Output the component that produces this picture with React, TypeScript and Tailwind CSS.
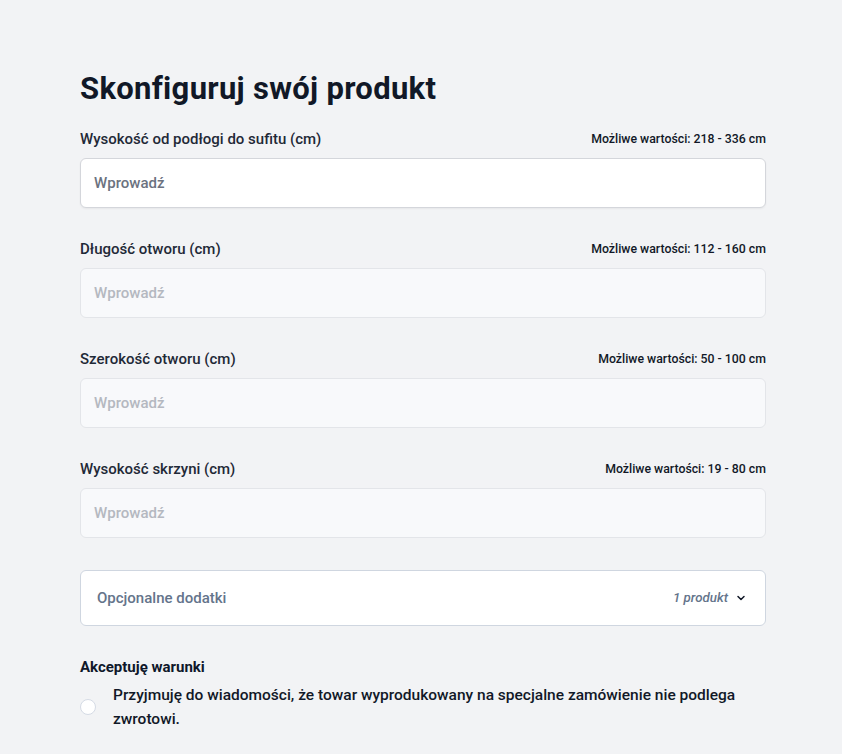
import { ChevronDown } from "lucide-react";

const fields = [
  { label: "Wysokość od podłogi do sufitu (cm)", range: "Możliwe wartości: 218 - 336 cm", active: true },
  { label: "Długość otworu (cm)", range: "Możliwe wartości: 112 - 160 cm", active: false },
  { label: "Szerokość otworu (cm)", range: "Możliwe wartości: 50 - 100 cm", active: false },
  { label: "Wysokość skrzyni (cm)", range: "Możliwe wartości: 19 - 80 cm", active: false },
];

export default function App() {
  return (
    <div
      className="min-h-[754px] bg-[#f2f3f5] text-[#111827]"
      style={{ fontFamily: "Roboto, 'Noto Sans', sans-serif" }}
    >
      <div className="w-[686px] ml-[80px] pt-[71px]">
        <h1 className="text-[31px] leading-[36px] font-bold tracking-[0.3px] text-[#111827]">
          Skonfiguruj swój produkt
        </h1>

        <div className="mt-[22px] flex flex-col gap-[31px]">
          {fields.map((f) => (
            <div key={f.label}>
              <div className="flex items-center justify-between h-[20px]">
                <span className="text-[15px] font-medium text-[#1f2937]">{f.label}</span>
                <span className="text-[12.3px] font-medium text-[#111827]">{f.range}</span>
              </div>
              <div
                className={`mt-[9px] h-[50px] rounded-[6px] border flex items-center px-[13px] text-[15px] font-medium ${
                  f.active
                    ? "bg-white border-[#d4d6db] text-[#6b7280] shadow-[0_1px_2px_rgba(0,0,0,0.05)]"
                    : "bg-[#f8f9fb] border-[#e3e5e9] text-[#b4b8c0]"
                }`}
              >
                Wprowadź
              </div>
            </div>
          ))}
        </div>

        <div className="mt-[32px] h-[56px] rounded-[6px] border border-[#cfd6e0] bg-white flex items-center justify-between pl-[16px] pr-[18px]">
          <span className="text-[15px] font-medium text-[#64748b]">Opcjonalne dodatki</span>
          <span className="flex items-center gap-[7px]">
            <span className="text-[13.3px] italic font-medium text-[#64748b]">1 produkt</span>
            <ChevronDown className="w-[12px] h-[12px] text-[#111827]" strokeWidth={3} />
          </span>
        </div>

        <div className="mt-[31px] text-[15px] font-bold text-[#0f172a] leading-[20px]">
          Akceptuję warunki
        </div>
        <div className="mt-[6px] flex items-center gap-[17px]">
          <span className="w-[16px] h-[16px] shrink-0 rounded-full bg-white border border-[#d5dbe5]" />
          <span className="text-[15.5px] leading-[24px] font-medium text-[#111827]">
            Przyjmuję do wiadomości, że towar wyprodukowany na specjalne zamówienie nie podlega
            zwrotowi.
          </span>
        </div>
      </div>
    </div>
  );
}
